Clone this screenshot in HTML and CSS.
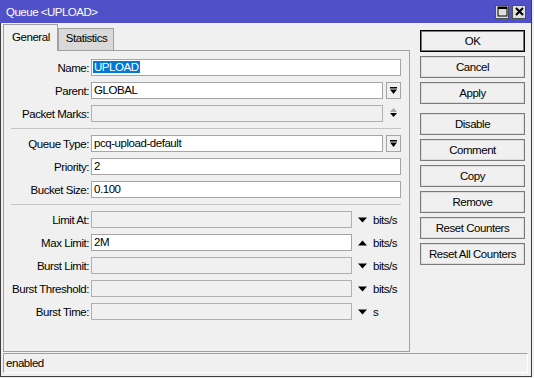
FILE: index.html
```html
<!DOCTYPE html>
<html lang="en">
<head>
    <meta charset="UTF-8">
    <title>Queue &lt;UPLOAD&gt;</title>
    <link rel="stylesheet" href="styles.css">
</head>
<body>
    <div class="window">
        <div class="titlebar">
            <span class="title">Queue &lt;UPLOAD&gt;</span>
            <div class="title-btns">
                <span class="tbtn">
                    <svg width="11" height="11" viewBox="0 0 11 11"><rect x="1" y="1" width="9" height="9" fill="none" stroke="#000" stroke-width="1"/><rect x="1" y="1" width="9" height="2" fill="#000"/></svg>
                </span>
                <span class="tbtn">
                    <svg width="11" height="11" viewBox="0 0 11 11"><path d="M2 2 L9 9 M9 2 L2 9" stroke="#000" stroke-width="2"/></svg>
                </span>
            </div>
        </div>

        <div class="main">
            <div class="tabs-area">
                <div class="tabs">
                    <div class="tab active">General</div>
                    <div class="tab">Statistics</div>
                </div>
                <div class="panel">
                    <div class="row">
                        <label class="lbl">Name:</label>
                        <div class="field"><span class="sel">UPLOAD</span></div>
                    </div>
                    <div class="row">
                        <label class="lbl">Parent:</label>
                        <div class="field">GLOBAL</div>
                        <span class="dd-btn">
                            <svg width="9" height="9" viewBox="0 0 9 9"><rect x="1" y="0" width="7" height="1.5" fill="#000"/><polygon points="1,2.5 8,2.5 4.5,7" fill="#000"/></svg>
                        </span>
                    </div>
                    <div class="row">
                        <label class="lbl">Packet Marks:</label>
                        <div class="field off"></div>
                        <span class="spin">
                            <svg width="9" height="17" viewBox="0 0 9 17"><polygon points="1,7 8,7 4.5,3" fill="#a8a8a8"/><polygon points="1,8 8,8 4.5,12" fill="#000"/></svg>
                        </span>
                    </div>

                    <div class="sep"></div>

                    <div class="row">
                        <label class="lbl">Queue Type:</label>
                        <div class="field">pcq-upload-default</div>
                        <span class="dd-btn">
                            <svg width="9" height="9" viewBox="0 0 9 9"><rect x="1" y="0" width="7" height="1.5" fill="#000"/><polygon points="1,2.5 8,2.5 4.5,7" fill="#000"/></svg>
                        </span>
                    </div>
                    <div class="row">
                        <label class="lbl">Priority:</label>
                        <div class="field">2</div>
                    </div>
                    <div class="row">
                        <label class="lbl">Bucket Size:</label>
                        <div class="field">0.100</div>
                    </div>

                    <div class="sep"></div>

                    <div class="row">
                        <label class="lbl">Limit At:</label>
                        <div class="field off"></div>
                        <span class="unit"><svg class="arrow" width="9" height="6" viewBox="0 0 9 6"><polygon points="0,0.5 9,0.5 4.5,5.5" fill="#000"/></svg>bits/s</span>
                    </div>
                    <div class="row">
                        <label class="lbl">Max Limit:</label>
                        <div class="field">2M</div>
                        <span class="unit"><svg class="arrow" width="9" height="6" viewBox="0 0 9 6"><polygon points="0,5.5 9,5.5 4.5,0.5" fill="#000"/></svg>bits/s</span>
                    </div>
                    <div class="row">
                        <label class="lbl">Burst Limit:</label>
                        <div class="field off"></div>
                        <span class="unit"><svg class="arrow" width="9" height="6" viewBox="0 0 9 6"><polygon points="0,0.5 9,0.5 4.5,5.5" fill="#000"/></svg>bits/s</span>
                    </div>
                    <div class="row">
                        <label class="lbl">Burst Threshold:</label>
                        <div class="field off"></div>
                        <span class="unit"><svg class="arrow" width="9" height="6" viewBox="0 0 9 6"><polygon points="0,0.5 9,0.5 4.5,5.5" fill="#000"/></svg>bits/s</span>
                    </div>
                    <div class="row">
                        <label class="lbl">Burst Time:</label>
                        <div class="field off"></div>
                        <span class="unit"><svg class="arrow" width="9" height="6" viewBox="0 0 9 6"><polygon points="0,0.5 9,0.5 4.5,5.5" fill="#000"/></svg>s</span>
                    </div>
                </div>
            </div>

            <div class="buttons">
                <button class="btn default">OK</button>
                <button class="btn">Cancel</button>
                <button class="btn">Apply</button>
                <button class="btn spaced">Disable</button>
                <button class="btn">Comment</button>
                <button class="btn">Copy</button>
                <button class="btn">Remove</button>
                <button class="btn">Reset Counters</button>
                <button class="btn">Reset All Counters</button>
            </div>
        </div>

        <div class="status">enabled</div>
    </div>
</body>
</html>
```

FILE: styles.css
```css
* {
    margin: 0;
    padding: 0;
    box-sizing: border-box;
}

body {
    font-family: 'Liberation Sans', Arial, sans-serif;
    font-size: 11.5px;
    letter-spacing: -0.45px;
    color: #000;
    background: #f0f0f0;
}

.window {
    width: 532px;
    height: 377px;
    background: #f0f0f0;
    border: 1px solid #3c3c3c;
    border-top: none;
}

.titlebar {
    height: 23px;
    margin: 0 -1px;
    background: #5050c9;
    display: flex;
    align-items: center;
    justify-content: space-between;
    padding: 0 5px 0 6px;
    border-right: 1px solid #3c3c3c;
}

.title {
    color: #fff;
    font-size: 11.5px;
    letter-spacing: -0.5px;
    padding-top: 1px;
}

.title-btns {
    display: flex;
    gap: 3px;
}

.tbtn {
    width: 14px;
    height: 14px;
    background: #dedede;
    border: 1px solid #505050;
    display: flex;
    align-items: center;
    justify-content: center;
}

.main {
    display: flex;
    padding: 2px 0 0 2px;
    height: 329px;
}

.tabs-area {
    width: 407px;
    display: flex;
    flex-direction: column;
}

.tabs {
    display: flex;
    align-items: flex-end;
    height: 26px;
    position: relative;
    z-index: 1;
}

.tab {
    height: 22px;
    padding: 3px 6px 0 7px;
    background: #d9d9d9;
    border: 1px solid #a0a0a0;
    border-bottom: none;
    margin-bottom: 1px;
}

.tab.active {
    height: 27px;
    padding: 6px 7px 0 8px;
    background: #f0f0f0;
    margin-bottom: 0;
}

.panel {
    height: 302px;
    margin-top: -1px;
    border: 1px solid #a0a0a0;
    padding: 8px 8px 0 0;
}

.row {
    display: flex;
    align-items: center;
    height: 17px;
    margin-bottom: 6px;
}

.lbl {
    width: 85px;
    margin-right: 2px;
    text-align: right;
    white-space: nowrap;
}

.field {
    flex: 1;
    height: 17px;
    background: #fff;
    border: 1px solid #a5a5a5;
    padding: 0 2px;
    line-height: 15px;
    white-space: nowrap;
}

.field.off {
    background: #f0f0f0;
    border-color: #b0b0b0;
}

.sel {
    background: #0078d7;
    color: #fff;
    padding: 0 1px;
    margin-left: -1px;
}

.dd-btn {
    width: 15px;
    height: 17px;
    margin-left: 3px;
    border: 1px solid #a5a5a5;
    background: #f0f0f0;
    display: flex;
    justify-content: center;
    padding-top: 4px;
}

.spin {
    width: 15px;
    height: 17px;
    margin-left: 3px;
    display: flex;
    justify-content: center;
}

.unit {
    width: 49px;
    display: flex;
    align-items: center;
    padding-left: 6px;
    white-space: nowrap;
}

.arrow {
    margin-right: 6px;
}

.sep {
    height: 1px;
    margin: 1px 0 6px 7px;
    background: #c4c4c4;
}

.buttons {
    width: 105px;
    margin-left: 10px;
    padding-top: 5px;
    display: flex;
    flex-direction: column;
    gap: 4px;
}

.btn {
    height: 22px;
    font-family: inherit;
    font-size: 11.5px;
    letter-spacing: -0.45px;
    color: #000;
    background: #f0f0f0;
    border: 1px solid #7a7a7a;
    box-shadow: inset 0 0 0 1px #dcdcdc;
}

.btn.default {
    border-color: #000;
    box-shadow: inset 0 0 0 1px #7a7a7a;
}

.btn.spaced {
    margin-top: 5px;
}

.status {
    margin: 1px 3px 0 2px;
    height: 20px;
    border-top: 1px solid #a0a0a0;
    border-left: 1px solid #a0a0a0;
    border-bottom: 1px solid #fff;
    border-right: 1px solid #fff;
    padding-left: 2px;
    line-height: 18px;
}
```
